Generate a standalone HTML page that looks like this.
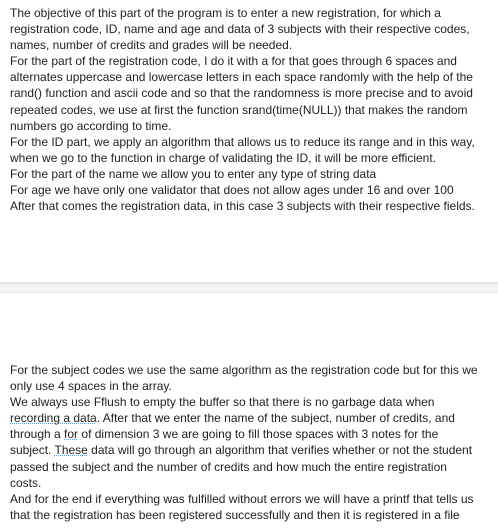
<!DOCTYPE html>
<html><head><meta charset="utf-8"><style>
body{margin:0;width:498px;height:530px;background:#fff;overflow:hidden;position:relative;font-family:"Liberation Sans",Arial,sans-serif;font-size:12px;color:#222}
.t{position:absolute;left:10px;line-height:16.1px;white-space:nowrap}
.brk{position:absolute;left:0;top:282px;width:498px;height:9px;background:linear-gradient(#e6e6e6,#f1f3f4 40%,#f6f6f6);border-top:1px solid #e0e0e0;border-bottom:1px solid #e8e8e8}
.u{text-decoration:underline dotted #6a9ae0;text-decoration-thickness:1px;text-underline-offset:1px}
</style></head><body>
<div class="t" style="top:5px">The objective of this part of the program is to enter a new registration, for which a<br>registration code, ID, name and age and data of 3 subjects with their respective codes,<br>names, number of credits and grades will be needed.<br>For the part of the registration code, I do it with a for that goes through 6 spaces and<br>alternates uppercase and lowercase letters in each space randomly with the help of the<br>rand() function and ascii code and so that the randomness is more precise and to avoid<br>repeated codes, we use at first the function srand(time(NULL)) that makes the random<br>numbers go according to time.<br>For the ID part, we apply an algorithm that allows us to reduce its range and in this way,<br>when we go to the function in charge of validating the ID, it will be more efficient.<br>For the part of the name we allow you to enter any type of string data<br>For age we have only one validator that does not allow ages under 16 and over 100<br>After that comes the registration data, in this case 3 subjects with their respective fields.</div>
<div class="brk"></div>
<div class="t" style="top:362px">For the subject codes we use the same algorithm as the registration code but for this we<br>only use 4 spaces in the array.<br>We always use Fflush to empty the buffer so that there is no garbage data when<br><span class="u">recording a data</span>. After that we enter the name of the subject, number of credits, and<br>through a <span class="u">for</span> of dimension 3 we are going to fill those spaces with 3 notes for the<br>subject. <span class="u">These</span> data will go through an algorithm that verifies whether or not the student<br>passed the subject and the number of credits and how much the entire registration<br>costs.<br>And for the end if everything was fulfilled without errors we will have a printf that tells us<br>that the registration has been registered successfully and then it is registered in a file</div>
</body></html>
